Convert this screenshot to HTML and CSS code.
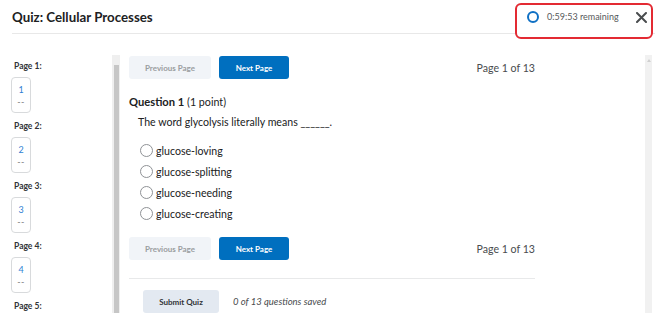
FILE: index.html
```html
<!DOCTYPE html>
<html lang="en">
<head>
  <meta charset="UTF-8" />
  <title>Quiz: Cellular Processes</title>
  <link rel="stylesheet" href="styles.css">
</head>
<body>

  <!-- Header -->
  <div class="header">
    <h1 class="title">Quiz: Cellular Processes</h1>
    <div class="timer-box">
      <span class="timer-ring"></span>
      <span class="timer-text">0:59:53 remaining</span>
      <svg class="close-icon" width="11" height="11" viewBox="0 0 11 11">
        <path d="M1 1 L10 10 M10 1 L1 10" stroke="#494c4e" stroke-width="2" stroke-linecap="round" />
      </svg>
    </div>
  </div>

  <div class="layout">
    <!-- Page list -->
    <div class="sidebar">
      <div class="page-label">Page 1:</div>
      <div class="page-box"><span class="num">1</span><span class="dash">--</span></div>
      <div class="page-label">Page 2:</div>
      <div class="page-box"><span class="num">2</span><span class="dash">--</span></div>
      <div class="page-label">Page 3:</div>
      <div class="page-box"><span class="num">3</span><span class="dash">--</span></div>
      <div class="page-label">Page 4:</div>
      <div class="page-box"><span class="num">4</span><span class="dash">--</span></div>
      <div class="page-label">Page 5:</div>
    </div>

    <div class="scroll-left"><div class="thumb"></div></div>

    <!-- Quiz -->
    <div class="main">
      <div class="nav-row">
        <button class="btn btn-prev">Previous Page</button>
        <button class="btn btn-next">Next Page</button>
        <span class="page-of">Page 1 of 13</span>
      </div>

      <div class="q-title"><b>Question 1</b> (1 point)</div>
      <div class="q-text">The word glycolysis literally means ______.</div>

      <div class="options">
        <label class="option"><span class="radio"></span>glucose-loving</label>
        <label class="option"><span class="radio"></span>glucose-splitting</label>
        <label class="option"><span class="radio"></span>glucose-needing</label>
        <label class="option"><span class="radio"></span>glucose-creating</label>
      </div>

      <div class="nav-row nav-bottom">
        <button class="btn btn-prev">Previous Page</button>
        <button class="btn btn-next">Next Page</button>
        <span class="page-of">Page 1 of 13</span>
      </div>

      <div class="submit-row">
        <button class="btn btn-submit">Submit Quiz</button>
        <span class="saved">0 of 13 questions saved</span>
      </div>
    </div>

    <div class="scroll-right"><span class="arrow"></span></div>
  </div>

</body>
</html>
```

FILE: styles.css
```css
body {
  margin: 0;
  font-family: Lato, "Open Sans", Arial, sans-serif;
  color: #494c4e;
  background: #fff;
  overflow: hidden;
}
.header {
  position: relative;
  margin: 0 15px 0 12px;
  height: 33px;
  border-bottom: 1px solid #e8e8e8;
  display: flex;
  align-items: flex-start;
}
.title {
  margin: 0;
  padding-top: 8px;
  font-size: 13.3px;
  font-weight: 700;
  color: #202122;
  line-height: 18px;
}
.timer-box {
  position: absolute;
  top: 3px;
  left: 503px;
  width: 134px;
  height: 32px;
  border: 2px solid #e32a33;
  border-radius: 6px;
  background: #fff;
  display: flex;
  align-items: center;
  align-self: flex-start;
  box-sizing: content-box;
}
.timer-box > * {
  margin-bottom: 8px;
}
.timer-ring {
  flex-shrink: 0;
  width: 8px;
  height: 8px;
  border: 2px solid #0f70c4;
  border-radius: 50%;
  margin-left: 10px;
}
.timer-text {
  white-space: nowrap;
  font-size: 9px;
  color: #56595b;
  margin-left: 8px;
  line-height: 12px;
}
.close-icon {
  flex-shrink: 0;
  margin-left: auto;
  margin-right: 4px;
}

.layout {
  display: flex;
  height: 279px;
}
.sidebar {
  width: 101px;
  padding: 26px 0 0 11px;
}
.page-label {
  font-size: 8.5px;
  font-weight: 700;
  color: #303336;
  line-height: 12px;
  margin: 0 0 5px 3px;
}
.page-box {
  width: 18px;
  height: 34px;
  border: 1px solid #d8dadc;
  border-radius: 4px;
  display: flex;
  flex-direction: column;
  align-items: center;
  margin-bottom: 7px;
}
.page-box .num {
  font-size: 9px;
  color: #2f7fd3;
  margin-top: 6px;
  line-height: 12px;
}
.page-box .dash {
  font-size: 9px;
  color: #7a7c7e;
  line-height: 12px;
  letter-spacing: 0.5px;
}
.scroll-left {
  width: 8px;
  margin-top: 21px;
  background: #efefef;
  position: relative;
}
.scroll-left .thumb {
  margin: 10px 1px 0 2px;
  height: 100%;
  background: #c6c6c6;
}
.main {
  width: 406px;
  margin-left: 9px;
  padding-top: 22px;
}
.nav-row {
  display: flex;
  align-items: center;
  height: 23px;
}
.btn {
  font-family: Lato, "Open Sans", Arial, sans-serif;
  font-size: 8px;
  font-weight: 700;
  border: none;
  border-radius: 3px;
  height: 23px;
  padding: 0;
  cursor: pointer;
}
.btn-prev {
  width: 82px;
  background: #f1f4f8;
  color: #9a9da0;
}
.btn-next {
  width: 70px;
  margin-left: 8px;
  background: #006fbf;
  color: #fff;
}
.page-of {
  margin-left: auto;
  font-size: 10.6px;
  color: #494c4e;
}
.q-title {
  margin-top: 15px;
  font-size: 10.7px;
  line-height: 16px;
  color: #202122;
}
.q-title b {
  font-size: 11.2px;
}
.q-text {
  margin: 4px 0 0 9px;
  font-size: 10.6px;
  line-height: 16px;
  color: #202122;
}
.options {
  margin: 10px 0 0 11px;
}
.option {
  display: flex;
  align-items: center;
  height: 21px;
  font-size: 10.6px;
  color: #202122;
}
.radio {
  width: 11px;
  height: 11px;
  border: 1px solid #8f9296;
  border-radius: 50%;
  margin-right: 3px;
}
.nav-bottom {
  margin-top: 13px;
}
.submit-row {
  margin-top: 18px;
  border-top: 1px solid #e8e9ea;
  padding: 11px 0 0 14px;
  display: flex;
  align-items: center;
}
.btn-submit {
  width: 76px;
  background: #e3e9f1;
  color: #303336;
}
.saved {
  margin-left: 14px;
  font-size: 9.5px;
  font-style: italic;
  color: #494c4e;
}
.scroll-right {
  width: 7px;
  margin: 21px 0 0 110px;
  background: #f1f1f1;
  position: relative;
}
.scroll-right .arrow {
  position: absolute;
  top: 4px;
  left: 2px;
  width: 0;
  height: 0;
  border-left: 2px solid transparent;
  border-right: 2px solid transparent;
  border-bottom: 3px solid #d0d0d0;
}
```
